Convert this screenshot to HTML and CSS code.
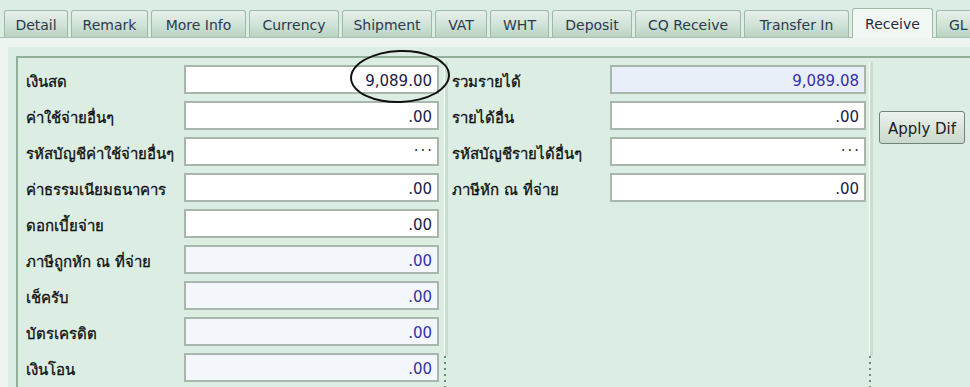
FILE: index.html
```html
<!DOCTYPE html>
<html lang="th">
<head>
    <meta charset="UTF-8">
    <title>Receive</title>
    <link rel="stylesheet" href="styles.css">
</head>
<body>
    <div class="tabs">
        <div class="tab w-detail">Detail</div>
        <div class="tab w-remark">Remark</div>
        <div class="tab w-more">More Info</div>
        <div class="tab w-currency">Currency</div>
        <div class="tab w-shipment">Shipment</div>
        <div class="tab w-vat">VAT</div>
        <div class="tab w-wht">WHT</div>
        <div class="tab w-deposit">Deposit</div>
        <div class="tab w-cq">CQ Receive</div>
        <div class="tab w-transfer">Transfer In</div>
        <div class="tab active w-receive">Receive</div>
        <div class="tab w-gl">GL</div>
    </div>

    <div class="panel">
        <div class="page">
            <div class="group">
                <div class="col col-left">
                    <div class="row"><label>เงินสด</label><div class="field">9,089.00</div></div>
                    <div class="row"><label>ค่าใช้จ่ายอื่นๆ</label><div class="field">.00</div></div>
                    <div class="row"><label>รหัสบัญชีค่าใช้จ่ายอื่นๆ</label><div class="field dots">···</div></div>
                    <div class="row"><label>ค่าธรรมเนียมธนาคาร</label><div class="field">.00</div></div>
                    <div class="row"><label>ดอกเบี้ยจ่าย</label><div class="field">.00</div></div>
                    <div class="row"><label>ภาษีถูกหัก ณ ที่จ่าย</label><div class="field readonly">.00</div></div>
                    <div class="row"><label>เช็ครับ</label><div class="field readonly">.00</div></div>
                    <div class="row"><label>บัตรเครดิต</label><div class="field readonly">.00</div></div>
                    <div class="row"><label>เงินโอน</label><div class="field readonly">.00</div></div>
                </div>

                <div class="splitter"><div class="line"></div><div class="grip"></div></div>

                <div class="col col-mid">
                    <div class="row"><label>รวมรายได้</label><div class="field total">9,089.08</div></div>
                    <div class="row"><label>รายได้อื่น</label><div class="field">.00</div></div>
                    <div class="row"><label>รหัสบัญชีรายได้อื่นๆ</label><div class="field dots">···</div></div>
                    <div class="row"><label>ภาษีหัก ณ ที่จ่าย</label><div class="field">.00</div></div>
                </div>

                <div class="splitter"><div class="line"></div><div class="grip"></div></div>

                <div class="col col-right">
                    <button class="apply">Apply Dif</button>
                </div>
            </div>
        </div>
    </div>

    <div class="mark"></div>
</body>
</html>
```

FILE: styles.css
```css
body {
    margin: 0;
    width: 970px;
    height: 387px;
    overflow: hidden;
    background: #dcede3;
    font-family: 'DejaVu Sans', Tahoma, sans-serif;
    font-size: 14px;
    color: #1c1c1c;
    display: flex;
    flex-direction: column;
}

/* tab strip */
.tabs {
    display: flex;
    align-items: flex-end;
    gap: 3px;
    height: 37px;
    padding-left: 4px;
    position: relative;
    z-index: 1;
}

.tab {
    box-sizing: border-box;
    height: 27px;
    border: 1px solid #9fb9a8;
    border-bottom: none;
    border-radius: 3px 3px 0 0;
    background: linear-gradient(#e6f0ea, #d0e2d6 55%, #b9d2c1);
    color: #2c3a50;
    font-size: 14px;
    display: flex;
    align-items: center;
    justify-content: center;
    padding-top: 2px;
    flex-shrink: 0;
}

.tab.active {
    height: 30px;
    margin-bottom: -1px;
    background: #f1f7f3;
    color: #1f2a44;
    padding-top: 0;
}

.w-detail { width: 64px; }
.w-remark { width: 77px; }
.w-more { width: 95px; }
.w-currency { width: 90px; }
.w-shipment { width: 90px; }
.w-vat { width: 52px; }
.w-wht { width: 59px; }
.w-deposit { width: 80px; }
.w-cq { width: 106px; }
.w-transfer { width: 105px; }
.w-receive { width: 81px; }
.w-gl { width: 60px; justify-content: flex-start; padding-left: 12px; }

/* tab page */
.panel {
    flex: 1;
    display: flex;
    border-top: 1px solid #a9c1b1;
    background: #eef5f1;
    padding: 9px 0 0 8px;
}

.page {
    flex: 1;
    display: flex;
    background: #dcede3;
    padding: 9px 0 0 8px;
}

.group {
    flex: 1;
    display: flex;
    border-top: 2px solid #93af9c;
    border-left: 2px solid #93af9c;
}

.col {
    display: flex;
    flex-direction: column;
    gap: 7px;
    padding-top: 7px;
}

.col-left { width: 426px; padding-left: 8px; box-sizing: border-box; }
.col-mid { width: 421px; padding-left: 4px; box-sizing: border-box; }

.row {
    display: flex;
    align-items: center;
    height: 29px;
}

.row label {
    flex-shrink: 0;
    padding-top: 5px;
    font-size: 15px;
    color: #0e0e0e;
    -webkit-text-stroke: 0.3px #0e0e0e;
}

.col-left label { width: 158px; }
.col-mid label { width: 158px; }

.field {
    box-sizing: border-box;
    height: 29px;
    border: 2px solid #a8b6ab;
    background: #fff;
    color: #1b1b4a;
    font-size: 15px;
    text-align: right;
    padding: 5px 5px 0 0;
}

.col-left .field { width: 255px; }
.col-mid .field { width: 256px; }

.field.readonly { background: #f3f6fb; color: #3430a8; }
.field.total { background: #e9eff8; color: #3430a8; }
.field.dots { color: #333; letter-spacing: 2px; padding: 3px 3px 0 0; }

/* splitter bars between the columns */
.splitter {
    width: 4px;
    display: flex;
    flex-direction: column;
    padding-top: 4px;
}

.splitter .line {
    height: 294px;
    border-left: 1px solid #fbfdfc;
    background: #c7e0cd;
}

.splitter .grip {
    flex: 1;
    width: 2px;
    background: repeating-linear-gradient(#6e8a77 0 2px, transparent 2px 6px);
}

.col-right { padding: 53px 0 0 6px; }

.apply {
    width: 86px;
    height: 33px;
    border: 1px solid #71827a;
    border-radius: 3px;
    background: linear-gradient(#edf3ee, #d9e5dc 50%, #c9d8cd);
    font-family: 'DejaVu Sans', Tahoma, sans-serif;
    font-size: 15px;
    color: #1c1c1c;
    padding: 2px 0 0;
}

/* hand-drawn ring round the cash amount */
.mark {
    position: absolute;
    left: 350px;
    top: 50px;
    width: 96px;
    height: 49px;
    border: 2px solid #111;
    border-radius: 50%;
    transform: rotate(-2deg);
}
```
